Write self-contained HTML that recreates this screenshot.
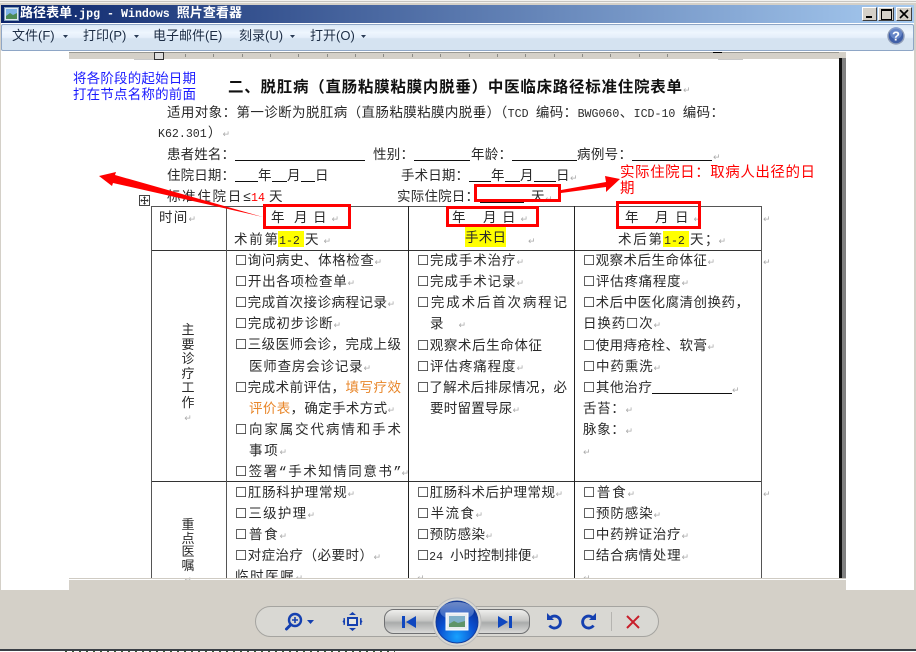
<!DOCTYPE html>
<html lang="zh"><head><meta charset="utf-8"><title>路径表单</title>
<style>
html,body{margin:0;padding:0;background:#fff}
#w{position:relative;width:916px;height:652px;overflow:hidden;background:#fff;font-family:"Liberation Sans","Noto Sans CJK SC",sans-serif}
.a{position:absolute}
.t{position:absolute;white-space:nowrap;font-size:13.5px;line-height:16px;height:16px;margin-top:3px;color:#2a2a2a;font-family:"Liberation Mono","Noto Sans CJK SC",sans-serif;text-align-last:justify}
.s{margin-top:0;font-family:"Liberation Sans","Noto Sans CJK SC",sans-serif}
.m{font-size:11.6px}
.r{color:#aaa;font-size:9px;font-family:"DejaVu Sans",sans-serif}
.u{position:absolute;height:1px;background:#111}
.l{position:absolute;background:#555}
.y{position:absolute;background:#ff0}
.b{position:absolute;border:3px solid #f00;box-sizing:border-box}
.tb{position:absolute;top:28px;height:16px;line-height:16px;font-size:13px;color:#1c2c44;white-space:nowrap;font-family:"Liberation Sans","Noto Sans CJK SC",sans-serif;text-align-last:justify}
.tick{position:absolute;top:54px;width:1px;height:3px;background:#8a8a85}
.v{position:absolute;width:16px;font-size:13px;color:#2a2a2a;text-align:center}
</style></head><body><div id="w">

<!-- frame -->
<div class="a" style="left:0;top:0;width:916px;height:5px;background:#f2f1ee"></div>
<div class="a" style="left:0;top:1px;width:916px;height:1px;background:#c8c6c2"></div>
<div class="a" style="left:0;top:3px;width:916px;height:2px;background:#d4d0c8"></div>
<div class="a" style="left:0;top:5px;width:1px;height:645px;background:#d4d0c8"></div>
<div class="a" style="left:914px;top:5px;width:2px;height:645px;background:#d4d0c8"></div>

<!-- title bar -->
<div class="a" style="left:1px;top:5px;width:913px;height:18px;background:linear-gradient(90deg,#0a246a,#a6caf0)"></div>
<svg class="a" style="left:4px;top:7px" width="16" height="15"><rect x=".5" y=".5" width="14" height="13" fill="#dfe8f2" stroke="#7f9db9"/><rect x="2" y="2" width="11" height="10" fill="#7fb3e6"/><path d="M2 9l4-3 3 2 4-2v6H2z" fill="#4d8a55"/></svg>
<div class="a" style="left:20px;top:6px;width:222px;height:16px;line-height:16px;font-size:13px;font-weight:700;color:#fff;white-space:nowrap;font-family:'Liberation Mono','Noto Sans CJK SC',monospace;text-align-last:justify">路径表单<span class="m">.jpg - Windows </span>照片查看器</div>
<div class="a" style="left:862px;top:7px;width:15px;height:14px;background:#d4d0c8;border:1px solid;border-color:#fff #404040 #404040 #fff;box-sizing:border-box"><div class="a" style="left:3px;top:8px;width:6px;height:2px;background:#000"></div></div>
<div class="a" style="left:878px;top:7px;width:16px;height:14px;background:#d4d0c8;border:1px solid;border-color:#fff #404040 #404040 #fff;box-sizing:border-box"><div class="a" style="left:2px;top:1px;width:9px;height:8px;border:1px solid #000;border-top-width:2px"></div></div>
<div class="a" style="left:896px;top:7px;width:16px;height:14px;background:#d4d0c8;border:1px solid;border-color:#fff #404040 #404040 #fff;box-sizing:border-box"><svg class="a" style="left:2px;top:1px" width="10" height="10"><path d="M1 1l8 8M9 1l-8 8" stroke="#000" stroke-width="1.6"/></svg></div>

<!-- toolbar -->
<div class="a" style="left:1px;top:24px;width:913px;height:27px;box-sizing:border-box;border:1px solid #8ea6c6;border-radius:2px;background:linear-gradient(#dbe8f6 0,#eef6fe 30%,#e4eefa 50%,#d5e3f1 55%,#d5e3f1 100%)"></div>
<div class="tb" style="left:12px;width:42px">文件(F)</div>
<div class="tb" style="left:83px;width:42px">打印(P)</div>
<div class="tb" style="left:153px;width:66px">电子邮件(E)</div>
<div class="tb" style="left:239px;width:41px">刻录(U)</div>
<div class="tb" style="left:310px;width:41px">打开(O)</div>
<svg class="a" style="left:0;top:30px" width="380" height="12" fill="#2a3b55"><path d="M63 5h5l-2.500 3zM134 5h5l-2.500 3zM290 5h5l-2.500 3zM361 5h5l-2.500 3z"/></svg>
<svg class="a" style="left:887px;top:27px" width="18" height="18"><circle cx="9" cy="9" r="8" fill="#3f5fa8" stroke="#8f9db8" stroke-width="1.4"/><circle cx="9" cy="6" r="6" fill="#7f9fdc" opacity=".6"/><text x="9" y="13.500" text-anchor="middle" font-size="13" font-weight="700" fill="#fff" font-family="Liberation Sans">?</text></svg>

<!-- ruler -->
<div class="a" style="left:69px;top:52px;width:777px;height:7px;background:#d4d0c8"></div>
<div class="a" style="left:69px;top:52px;width:770px;height:1px;background:#9a9a94"></div>
<div class="a" style="left:134px;top:59px;width:25px;height:1px;background:#c8c8c8"></div>
<div class="a" style="left:718px;top:59px;width:25px;height:1px;background:#c8c8c8"></div>
<div class="a" style="left:713px;top:52px;width:9px;height:1px;background:#000"></div>
<div class="a" style="left:154px;top:52px;width:8px;height:6px;border:1px solid #333;background:#ddd"></div>
<i class="tick" style="left:185px"></i><i class="tick" style="left:213px"></i><i class="tick" style="left:242px"></i><i class="tick" style="left:270px"></i><i class="tick" style="left:298px"></i><i class="tick" style="left:327px"></i><i class="tick" style="left:355px"></i><i class="tick" style="left:383px"></i><i class="tick" style="left:412px"></i><i class="tick" style="left:440px"></i><i class="tick" style="left:469px"></i><i class="tick" style="left:497px"></i><i class="tick" style="left:525px"></i><i class="tick" style="left:554px"></i><i class="tick" style="left:582px"></i><i class="tick" style="left:610px"></i><i class="tick" style="left:639px"></i><i class="tick" style="left:667px"></i>

<!-- doc right edge -->
<div class="a" style="left:839px;top:58px;width:3px;height:520px;background:#111"></div>
<div class="a" style="left:842px;top:58px;width:4px;height:520px;background:#808080"></div>

<!-- annotations -->
<div class="t s" style="left:73px;top:71px;width:123px;color:#1a1aff">将各阶段的起始日期</div>
<div class="t s" style="left:73px;top:87px;width:123px;color:#1a1aff">打在节点名称的前面</div>
<div class="t s" style="left:620px;top:165px;width:195px;color:#f00;font-size:14.500px">实际住院日：取病人出径的日</div>
<div class="t s" style="left:620px;top:181px;width:15px;color:#f00;font-size:14.500px">期</div>

<!-- heading -->
<div class="t s" style="left:228px;top:80px;width:454px;font-size:15.500px;font-weight:700;color:#111">二、脱肛病（直肠粘膜粘膜内脱垂）中医临床路径标准住院表单</div>
<div class="t s" style="left:683px;top:81px;width:10px"><span class="r">↵</span></div>

<!-- form lines -->
<div class="t" style="left:167px;top:104px;width:557px">适用对象：第一诊断为脱肛病（直肠粘膜粘膜内脱垂）（<span class="m">TCD </span>编码：<span class="m">BWG060</span>、<span class="m">ICD-10 </span>编码：</div>
<div class="t" style="left:158px;top:124px;width:72px"><span class="m">K62.301</span>）<span class="r">↵</span></div>
<div class="t" style="left:167px;top:146px;width:68px">患者姓名：</div><div class="u" style="left:235px;top:160px;width:130px"></div>
<div class="t" style="left:373px;top:146px;width:41px">性别：</div><div class="u" style="left:414px;top:160px;width:56px"></div>
<div class="t" style="left:471px;top:146px;width:41px">年龄：</div><div class="u" style="left:512px;top:160px;width:65px"></div>
<div class="t" style="left:577px;top:146px;width:55px">病例号：</div><div class="u" style="left:632px;top:160px;width:80px"></div>
<div class="t" style="left:713px;top:147px;width:10px"><span class="r">↵</span></div>
<div class="t" style="left:167px;top:167px;width:68px">住院日期：</div>
<div class="u" style="left:235px;top:181px;width:23px"></div><div class="t" style="left:258px;top:167px;width:14px">年</div>
<div class="u" style="left:272px;top:181px;width:15px"></div><div class="t" style="left:287px;top:167px;width:14px">月</div>
<div class="u" style="left:301px;top:181px;width:14px"></div><div class="t" style="left:315px;top:167px;width:14px">日</div>
<div class="t" style="left:401px;top:167px;width:68px">手术日期：</div>
<div class="u" style="left:469px;top:181px;width:22px"></div><div class="t" style="left:491px;top:167px;width:14px">年</div>
<div class="u" style="left:505px;top:181px;width:15px"></div><div class="t" style="left:520px;top:167px;width:14px">月</div>
<div class="u" style="left:534px;top:181px;width:22px"></div><div class="t" style="left:556px;top:167px;width:14px">日</div>
<div class="t" style="left:570px;top:168px;width:10px"><span class="r">↵</span></div>
<div class="t" style="left:167px;top:188px;width:84px">标准住院日≤</div>
<div class="t" style="left:251px;top:188px;width:15px;color:#f00"><span class="m">14</span></div>
<div class="t" style="left:269px;top:188px;width:14px">天</div>
<div class="t" style="left:397px;top:188px;width:82px">实际住院日：</div>
<div class="u" style="left:480px;top:202px;width:44px"></div>
<div class="t" style="left:531px;top:188px;width:14px">天</div><div class="t" style="left:545px;top:189px;width:10px"><span class="r">↵</span></div>

<!-- table move handle -->
<div class="a" style="left:139px;top:195px;width:11px;height:11px;box-sizing:border-box;border:1px solid #444;background:#fff"><svg class="a" style="left:0;top:0" width="9" height="9"><path d="M4.500 1v7M1 4.500h7M3.500 2l1-1 1 1M3.500 7l1 1 1-1M2 3.500l-1 1 1 1M7 3.500l1 1-1 1" fill="none" stroke="#333"/></svg></div>

<!-- highlights -->
<div class="y" style="left:278px;top:231px;width:26px;height:16px"></div>
<div class="y" style="left:465px;top:227px;width:41px;height:20px"></div>
<div class="y" style="left:663px;top:231px;width:26px;height:16px"></div>

<!-- table lines -->
<div class="l" style="left:151px;top:206px;width:611px;height:1px"></div>
<div class="l" style="left:151px;top:250px;width:611px;height:1px;background:#333"></div>
<div class="l" style="left:151px;top:481px;width:611px;height:1px;background:#333"></div>
<div class="l" style="left:151px;top:206px;width:1px;height:372px"></div>
<div class="l" style="left:226px;top:206px;width:1px;height:372px"></div>
<div class="l" style="left:408px;top:206px;width:1px;height:372px;background:#222"></div>
<div class="l" style="left:574px;top:206px;width:1px;height:372px;background:#222"></div>
<div class="l" style="left:761px;top:206px;width:1px;height:372px"></div>

<!-- header row -->
<div class="t" style="left:159px;top:209px;width:37px">时间<span class="r">↵</span></div>
<div class="t" style="left:271px;top:209px;width:14px">年</div><div class="t" style="left:294px;top:209px;width:14px">月</div><div class="t" style="left:313px;top:209px;width:26px">日<span class="r">↵</span></div>
<div class="t" style="left:234px;top:231px;width:44px">术前第</div><div class="t" style="left:279px;top:231px;width:22px"><span class="m">1-2</span></div><div class="t" style="left:305px;top:231px;width:26px">天<span class="r">↵</span></div>
<div class="t" style="left:452px;top:209px;width:14px">年</div><div class="t" style="left:483px;top:209px;width:14px">月</div><div class="t" style="left:502px;top:209px;width:26px">日<span class="r">↵</span></div>
<div class="t" style="left:465px;top:229px;width:41px">手术日</div><div class="t" style="left:528px;top:231px;width:10px"><span class="r">↵</span></div>
<div class="t" style="left:625px;top:209px;width:14px">年</div><div class="t" style="left:655px;top:209px;width:14px">月</div><div class="t" style="left:675px;top:209px;width:26px">日<span class="r">↵</span></div>
<div class="t" style="left:618px;top:231px;width:44px">术后第</div><div class="t" style="left:664px;top:231px;width:22px"><span class="m">1-2</span></div><div class="t" style="left:690px;top:231px;width:36px">天；<span class="r">↵</span></div>
<div class="t" style="left:763px;top:209px;width:10px"><span class="r">↵</span></div>
<div class="t" style="left:763px;top:252px;width:10px"><span class="r">↵</span></div>
<div class="t" style="left:763px;top:484px;width:10px"><span class="r">↵</span></div>

<!-- vertical labels -->
<div class="v" style="left:180px;top:323px;line-height:14.500px">主<br>要<br>诊<br>疗<br>工<br>作<br><span class="r">↵</span></div>
<div class="v" style="left:180px;top:518px;line-height:13.500px">重<br>点<br>医<br>嘱<br><span class="r">↵</span></div>

<!-- col 2 -->
<div class="t" style="left:235px;top:252px;width:147px">☐询问病史、体格检查<span class="r">↵</span></div>
<div class="t" style="left:235px;top:273px;width:120px">☐开出各项检查单<span class="r">↵</span></div>
<div class="t" style="left:235px;top:294px;width:160px">☐完成首次接诊病程记录<span class="r">↵</span></div>
<div class="t" style="left:235px;top:315px;width:106px">☐完成初步诊断<span class="r">↵</span></div>
<div class="t" style="left:235px;top:336px;width:166px">☐三级医师会诊，完成上级</div>
<div class="t" style="left:249px;top:358px;width:122px">医师查房会诊记录<span class="r">↵</span></div>
<div class="t" style="left:235px;top:379px;width:166px">☐完成术前评估，<span style="color:#e8872b">填写疗效</span></div>
<div class="t" style="left:249px;top:400px;width:146px"><span style="color:#e8872b">评价表</span>，确定手术方式<span class="r">↵</span></div>
<div class="t" style="left:235px;top:421px;width:166px">☐向家属交代病情和手术</div>
<div class="t" style="left:249px;top:442px;width:38px">事项<span class="r">↵</span></div>
<div class="t" style="left:235px;top:463px;width:174px">☐签署“手术知情同意书”<span class="r">↵</span></div>
<div class="t" style="left:235px;top:484px;width:120px">☐肛肠科护理常规<span class="r">↵</span></div>
<div class="t" style="left:235px;top:505px;width:80px">☐三级护理<span class="r">↵</span></div>
<div class="t" style="left:235px;top:526px;width:52px">☐普食<span class="r">↵</span></div>
<div class="t" style="left:235px;top:547px;width:146px">☐对症治疗（必要时）<span class="r">↵</span></div>
<div class="a" style="left:235px;top:568px;width:80px;height:10px;overflow:hidden"><div class="t" style="left:0;top:0;width:68px">临时医嘱<span class="r">↵</span></div></div>

<!-- col 3 -->
<div class="t" style="left:417px;top:252px;width:107px">☐完成手术治疗<span class="r">↵</span></div>
<div class="t" style="left:417px;top:273px;width:107px">☐完成手术记录<span class="r">↵</span></div>
<div class="t" style="left:417px;top:294px;width:150px">☐完成术后首次病程记</div>
<div class="t" style="left:430px;top:315px;width:36px">录 <span class="r">↵</span></div>
<div class="t" style="left:417px;top:337px;width:125px">☐观察术后生命体征</div>
<div class="t" style="left:417px;top:358px;width:107px">☐评估疼痛程度<span class="r">↵</span></div>
<div class="t" style="left:417px;top:379px;width:150px">☐了解术后排尿情况，必</div>
<div class="t" style="left:430px;top:400px;width:90px">要时留置导尿<span class="r">↵</span></div>
<div class="t" style="left:417px;top:484px;width:146px">☐肛肠科术后护理常规<span class="r">↵</span></div>
<div class="t" style="left:417px;top:505px;width:66px">☐半流食<span class="r">↵</span></div>
<div class="t" style="left:417px;top:526px;width:76px">☐预防感染<span class="r">↵</span></div>
<div class="t" style="left:417px;top:547px;width:122px">☐<span class="m">24 </span>小时控制排便<span class="r">↵</span></div>
<div class="a" style="left:417px;top:568px;width:12px;height:10px;overflow:hidden"><div class="t" style="left:0;top:0;width:10px"><span class="r">↵</span></div></div>

<!-- col 4 -->
<div class="t" style="left:583px;top:252px;width:132px">☐观察术后生命体征<span class="r">↵</span></div>
<div class="t" style="left:583px;top:273px;width:106px">☐评估疼痛程度<span class="r">↵</span></div>
<div class="t" style="left:583px;top:294px;width:166px">☐术后中医化腐清创换药，</div>
<div class="t" style="left:583px;top:315px;width:78px">日换药☐次<span class="r">↵</span></div>
<div class="t" style="left:583px;top:337px;width:132px">☐使用痔疮栓、软膏<span class="r">↵</span></div>
<div class="t" style="left:583px;top:358px;width:78px">☐中药熏洗<span class="r">↵</span></div>
<div class="t" style="left:583px;top:379px;width:69px">☐其他治疗</div><div class="u" style="left:652px;top:393px;width:80px"></div><div class="t" style="left:732px;top:380px;width:10px"><span class="r">↵</span></div>
<div class="t" style="left:583px;top:400px;width:50px">舌苔：<span class="r">↵</span></div>
<div class="t" style="left:583px;top:421px;width:50px">脉象：<span class="r">↵</span></div>
<div class="t" style="left:583px;top:442px;width:10px"><span class="r">↵</span></div>
<div class="t" style="left:583px;top:484px;width:52px">☐普食<span class="r">↵</span></div>
<div class="t" style="left:583px;top:505px;width:78px">☐预防感染<span class="r">↵</span></div>
<div class="t" style="left:583px;top:526px;width:106px">☐中药辨证治疗<span class="r">↵</span></div>
<div class="t" style="left:583px;top:547px;width:106px">☐结合病情处理<span class="r">↵</span></div>
<div class="a" style="left:583px;top:568px;width:12px;height:10px;overflow:hidden"><div class="t" style="left:0;top:0;width:10px"><span class="r">↵</span></div></div>

<!-- red boxes and arrows -->
<div class="b" style="left:263px;top:204px;width:88px;height:25px"></div>
<div class="b" style="left:446px;top:206px;width:93px;height:21px"></div>
<div class="b" style="left:616px;top:201px;width:85px;height:28px"></div>
<div class="b" style="left:474px;top:184px;width:87px;height:18px"></div>
<svg class="a" style="left:0;top:0" width="916" height="652"><polygon points="99,176 116,172 115,175 263,217 113,183 112,186" fill="#f00"/><polygon points="620,179 605,176 606,182 561,190 561,193 606,187 606,192" fill="#f00"/></svg>

<!-- bottom panel -->
<div class="a" style="left:69px;top:578px;width:777px;height:1px;background:#cfcbc3"></div>
<div class="a" style="left:69px;top:580px;width:777px;height:10px;background:#d4d0c8"></div>
<div class="a" style="left:0;top:590px;width:916px;height:59px;background:#d4d0c8"></div>
<div class="a" style="left:0;top:649px;width:916px;height:2px;background:#3a3f46"></div>
<div class="a" style="left:0;top:651px;width:916px;height:1px;background:#fff"></div>
<div class="a" style="left:65px;top:651px;width:330px;height:1px;background:repeating-linear-gradient(90deg,#3a5a3a 0 2px,#fff 2px 7px)"></div>

<!-- control pill -->
<svg class="a" style="left:240px;top:595px" width="440" height="56" viewBox="240 595 440 56">
<defs>
<linearGradient id="g1" x1="0" y1="0" x2="0" y2="1"><stop offset="0" stop-color="#f0f0ee"/><stop offset=".45" stop-color="#c8c8c6"/><stop offset=".55" stop-color="#a9abab"/><stop offset="1" stop-color="#dcdcda"/></linearGradient>
<radialGradient id="g2" cx=".5" cy=".85" r=".8"><stop offset="0" stop-color="#18a2ff"/><stop offset=".55" stop-color="#0a4fd0"/><stop offset="1" stop-color="#0a2c8e"/></radialGradient>
<linearGradient id="g3" x1="0" y1="0" x2="0" y2="1"><stop offset="0" stop-color="#8fa8d8"/><stop offset="1" stop-color="#3a6ccc"/></linearGradient>
</defs>
<rect x="255.500" y="606.500" width="403" height="30" rx="15" fill="#d9d8d3" stroke="#a5a4a0"/>
<rect x="384.500" y="609.500" width="145" height="24" rx="9" fill="url(#g1)" stroke="#6f7072"/>
<circle cx="457" cy="622" r="24" fill="#d8d8d4" stroke="#bbb"/>
<circle cx="457" cy="622" r="21" fill="url(#g2)" stroke="#123c9c"/>
<ellipse cx="457" cy="611" rx="17" ry="9" fill="url(#g3)" opacity=".75"/>
<rect x="446" y="613" width="22" height="17" fill="#e9edf0" stroke="#fff"/>
<rect x="449" y="616" width="16" height="11" fill="#7fb0c8"/>
<path d="M449 624l5-3 4 2 7-2v6h-16z" fill="#5e9468"/>
<!-- zoom -->
<circle cx="295" cy="620" r="6" fill="#d9d8d3" stroke="#1540b0" stroke-width="2.400"/>
<path d="M292 620h6M295 617v6" stroke="#1540b0" stroke-width="1.600"/>
<path d="M290.500 625l-4 4" stroke="#1540b0" stroke-width="3" stroke-linecap="round"/>
<path d="M307 620h7l-3.500 4z" fill="#1540b0"/>
<!-- fit -->
<rect x="348" y="618" width="9" height="7" fill="#e6e6e2" stroke="#1540b0" stroke-width="2"/>
<path d="M349 615h7l-3.500-3zM349 628h7l-3.500 3zM345 618v7l-2.500-3.500zM360 618v7l2.500-3.500z" fill="#1540b0"/>
<path d="M344 618v7M361 618v7" stroke="#1540b0"/>
<!-- prev/next -->
<path d="M402 616h3v12h-3zM416 616v12l-10-6z" fill="#0f47bf"/>
<path d="M509 616h3v12h-3zM498 616v12l10-6z" fill="#0f47bf"/>
<!-- rotate -->
<path d="M550.500 617.500a6 6 0 1 1-1 8" fill="none" stroke="#1540b0" stroke-width="2.800"/>
<path d="M547 613v7h7z" fill="#1540b0"/>
<path d="M592.500 617.500a6 6 0 1 0 1 8" fill="none" stroke="#1540b0" stroke-width="2.800"/>
<path d="M596 613v7h-7z" fill="#1540b0"/>
<path d="M611.500 612v19" stroke="#b5b4b0"/>
<path d="M627 616l12 12M639 616l-12 12" stroke="#c81e2a" stroke-width="2"/>
</svg>
</div></body></html>
